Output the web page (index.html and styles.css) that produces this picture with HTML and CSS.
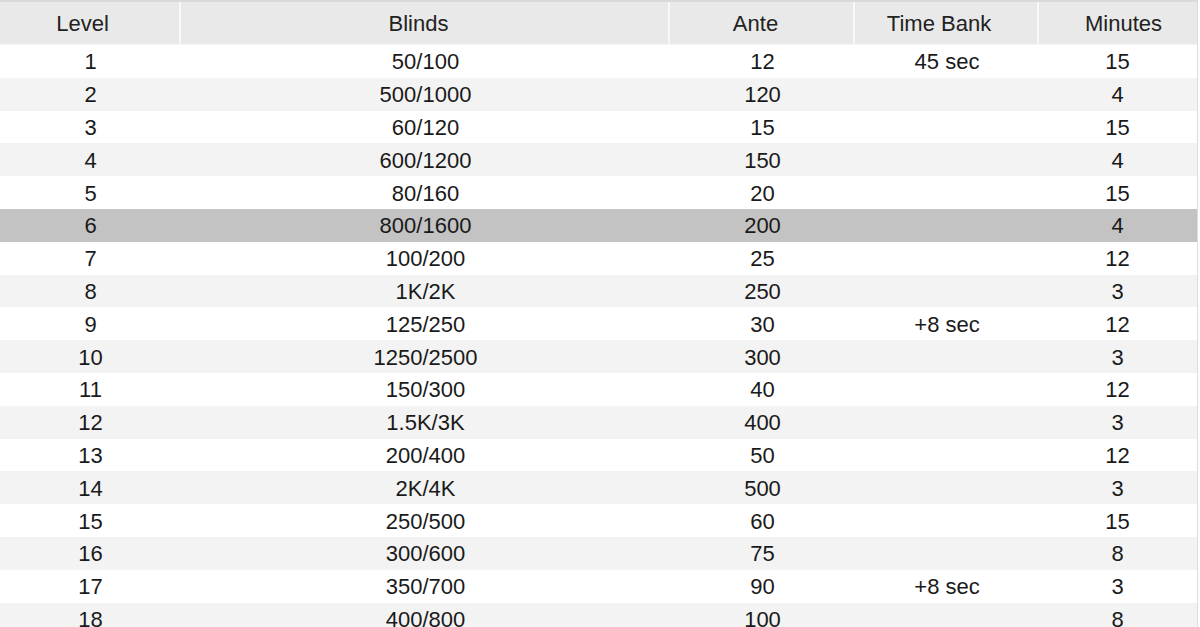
FILE: index.html
```html
<!DOCTYPE html>
<html>
<head>
<meta charset="utf-8">
<link rel="stylesheet" href="styles.css">
</head>
<body>
<div class="table">
  <div class="row head">
    <div class="cell c-level">Level</div>
    <div class="cell c-blinds">Blinds</div>
    <div class="cell c-ante">Ante</div>
    <div class="cell c-bank">Time Bank</div>
    <div class="cell c-min">Minutes</div>
  </div>
  <div class="row"><div class="cell">1</div><div class="cell">50/100</div><div class="cell">12</div><div class="cell">45 sec</div><div class="cell">15</div></div>
  <div class="row alt"><div class="cell">2</div><div class="cell">500/1000</div><div class="cell">120</div><div class="cell"></div><div class="cell">4</div></div>
  <div class="row"><div class="cell">3</div><div class="cell">60/120</div><div class="cell">15</div><div class="cell"></div><div class="cell">15</div></div>
  <div class="row alt"><div class="cell">4</div><div class="cell">600/1200</div><div class="cell">150</div><div class="cell"></div><div class="cell">4</div></div>
  <div class="row"><div class="cell">5</div><div class="cell">80/160</div><div class="cell">20</div><div class="cell"></div><div class="cell">15</div></div>
  <div class="row sel"><div class="cell">6</div><div class="cell">800/1600</div><div class="cell">200</div><div class="cell"></div><div class="cell">4</div></div>
  <div class="row"><div class="cell">7</div><div class="cell">100/200</div><div class="cell">25</div><div class="cell"></div><div class="cell">12</div></div>
  <div class="row alt"><div class="cell">8</div><div class="cell">1K/2K</div><div class="cell">250</div><div class="cell"></div><div class="cell">3</div></div>
  <div class="row"><div class="cell">9</div><div class="cell">125/250</div><div class="cell">30</div><div class="cell">+8 sec</div><div class="cell">12</div></div>
  <div class="row alt"><div class="cell">10</div><div class="cell">1250/2500</div><div class="cell">300</div><div class="cell"></div><div class="cell">3</div></div>
  <div class="row"><div class="cell">11</div><div class="cell">150/300</div><div class="cell">40</div><div class="cell"></div><div class="cell">12</div></div>
  <div class="row alt"><div class="cell">12</div><div class="cell">1.5K/3K</div><div class="cell">400</div><div class="cell"></div><div class="cell">3</div></div>
  <div class="row"><div class="cell">13</div><div class="cell">200/400</div><div class="cell">50</div><div class="cell"></div><div class="cell">12</div></div>
  <div class="row alt"><div class="cell">14</div><div class="cell">2K/4K</div><div class="cell">500</div><div class="cell"></div><div class="cell">3</div></div>
  <div class="row"><div class="cell">15</div><div class="cell">250/500</div><div class="cell">60</div><div class="cell"></div><div class="cell">15</div></div>
  <div class="row alt"><div class="cell">16</div><div class="cell">300/600</div><div class="cell">75</div><div class="cell"></div><div class="cell">8</div></div>
  <div class="row"><div class="cell">17</div><div class="cell">350/700</div><div class="cell">90</div><div class="cell">+8 sec</div><div class="cell">3</div></div>
  <div class="row alt"><div class="cell">18</div><div class="cell">400/800</div><div class="cell">100</div><div class="cell"></div><div class="cell">8</div></div>
</div>
</body>
</html>
```
FILE: styles.css
```css
html, body {
  margin: 0;
  padding: 0;
  background: #ffffff;
  overflow: hidden;
}
.table {
  width: 1197px;
  font-family: "Liberation Sans", Arial, sans-serif;
  font-size: 22px;
  color: #1a1a1a;
  border-right: 1px solid #dcdcdc;
}
.row {
  display: grid;
  grid-template-columns: 181px 489px 185px 184px 157px;
  height: 32.8px;
  background: #ffffff;
}
.row.alt {
  background: #f3f3f3;
}
.row.sel {
  background: #c3c3c3;
}
.cell {
  display: flex;
  align-items: center;
  justify-content: center;
  padding-top: 2px;
}
.row.head {
  height: 42px;
  border-top: 2px solid #dadada;
  border-bottom: 1px solid #f5f5f5;
  background: #e9e9e9;
  color: #222;
}
.row.head .cell {
  border-right: 2px solid #f8f8f8;
  padding-top: 1px;
}
.row.head .cell:last-child {
  border-right: none;
}
.c-level { padding-right: 14px; }
.c-blinds { padding-right: 12px; }
.c-ante { padding-right: 12px; }
.c-bank { padding-right: 14px; }
.c-min { padding-left: 12px; }
```
